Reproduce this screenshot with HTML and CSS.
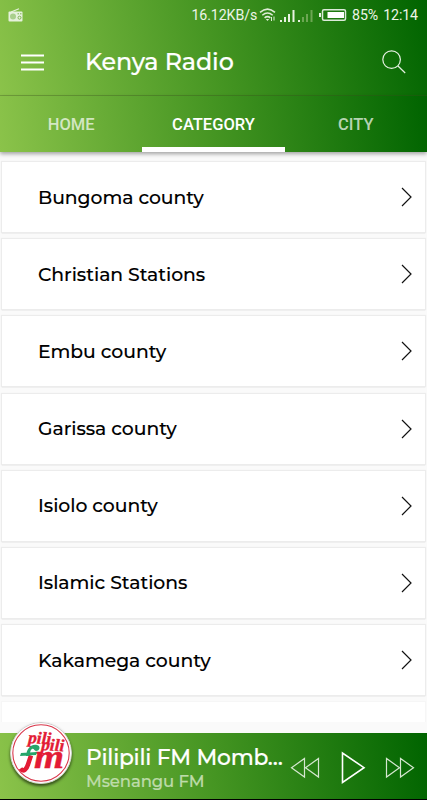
FILE: index.html
```html
<!DOCTYPE html>
<html lang="en">
  <head>
    <meta charset="UTF-8" />
    <meta name="viewport" content="width=device-width, initial-scale=1.0" />
    <title>Kenya Radio</title>
    <link rel="stylesheet" href="styles.css">
  </head>
  <body>
    <div class="app">
      <header class="header">
        <div class="status">
          <svg class="status-radio" width="15" height="14" viewBox="0 0 15 14">
            <path d="M3 4 11 .7" stroke="#e6f1dc" stroke-width="1.2" />
            <rect x="0.5" y="3.5" width="14" height="10" rx="1" fill="#e6f1dc" />
            <circle cx="5" cy="8.5" r="3" fill="#a9cf8c" />
            <circle cx="11.5" cy="9.7" r="1.5" fill="none" stroke="#7fb453" />
            <path d="M9.5 5.8h4" stroke="#7fb453" stroke-dasharray="1.5 1" />
          </svg>
          <span class="speed">16.12KB/s</span>
          <svg class="wifi" width="18" height="14" viewBox="0 0 18 14" fill="none" stroke="#e0ecd8" stroke-width="1.5">
            <path d="M1 4.4Q8.5-2.2 16 4.4M3.3 7.3Q8.5 2.8 13.7 7.3M5.6 9.8Q8.5 7.4 11.4 9.8" />
            <path d="m6.8 11 1.7 2 1.7-2z" fill="#e0ecd8" stroke="none" />
            <path d="M12.5 9v4M15 8.5v4" stroke-width="1" />
          </svg>
          <svg class="signal" width="15" height="13" viewBox="0 0 15 13" fill="#e8f2e2">
            <path d="M0 11h2v2H0zM4 8h2v5H4zM8 5h2v8H8zM12.5 1h2v12h-2z" />
          </svg>
          <svg class="signal second" width="15" height="13" viewBox="0 0 15 13" fill="#6ca653">
            <path d="M0 11h2v2H0z" fill="#e8f2e2" />
            <path d="M4 8h2v5H4zM8 5h2v8H8zM12.5 1h2v12h-2z" />
          </svg>
          <svg class="battery" width="28" height="12" viewBox="0 0 28 12">
            <path d="M1 4v4" stroke="#e8f2e2" stroke-width="2" />
            <rect x="3.5" y="0.75" width="23" height="10.5" rx="1.5" fill="none" stroke="#dceada" stroke-width="1.5" />
            <path d="M8.5 3H25v6H8.5z" fill="#fff" />
          </svg>
          <span class="percent">85%</span>
          <span class="time">12:14</span>
        </div>
        <div class="toolbar">
          <button class="btn-menu" aria-label="Menu">
            <svg width="23" height="17" viewBox="0 0 23 17" stroke="#fff" stroke-width="2.1">
              <path d="M0 1.5h23M0 8.5h23M0 15.5h23" />
            </svg>
          </button>
          <h1 class="title">Kenya Radio</h1>
          <button class="btn-search" aria-label="Search">
            <svg width="24" height="24" viewBox="0 0 24 24" fill="none" stroke="#e5f0e2" stroke-width="1.2">
              <circle cx="9.6" cy="9.6" r="8.8" />
              <path d="m16 16 7.2 7" />
            </svg>
          </button>
        </div>
      </header>

      <nav class="tabs">
        <a class="tab">HOME</a>
        <a class="tab active">CATEGORY</a>
        <a class="tab">CITY</a>
      </nav>

      <main class="list">
        <div class="card"><span class="name">Bungoma county</span><svg class="arrow" viewBox="0 0 11 20"><path d="m1 1 9 9-9 9" /></svg></div>
        <div class="card"><span class="name">Christian Stations</span><svg class="arrow" viewBox="0 0 11 20"><path d="m1 1 9 9-9 9" /></svg></div>
        <div class="card"><span class="name">Embu county</span><svg class="arrow" viewBox="0 0 11 20"><path d="m1 1 9 9-9 9" /></svg></div>
        <div class="card"><span class="name">Garissa county</span><svg class="arrow" viewBox="0 0 11 20"><path d="m1 1 9 9-9 9" /></svg></div>
        <div class="card"><span class="name">Isiolo county</span><svg class="arrow" viewBox="0 0 11 20"><path d="m1 1 9 9-9 9" /></svg></div>
        <div class="card"><span class="name">Islamic Stations</span><svg class="arrow" viewBox="0 0 11 20"><path d="m1 1 9 9-9 9" /></svg></div>
        <div class="card"><span class="name">Kakamega county</span><svg class="arrow" viewBox="0 0 11 20"><path d="m1 1 9 9-9 9" /></svg></div>
        <div class="card partial"></div>
      </main>

      <footer class="player">
        <svg class="logo" width="62" height="62" viewBox="0 0 62 62">
          <circle cx="31" cy="31" r="30.5" fill="#fff" stroke="#ccc" />
          <circle cx="31" cy="31" r="28.2" fill="none" stroke="#d8364a" stroke-width="1.1" />
          <g class="logo-text">
            <text x="18" y="21" font-size="17" textLength="23" lengthAdjust="spacingAndGlyphs" transform="rotate(3 18 21)">pili</text>
            <text x="31" y="28" font-size="17" textLength="23" lengthAdjust="spacingAndGlyphs" transform="rotate(3 31 28)">pili</text>
            <text x="24" y="46" font-size="33" textLength="30" lengthAdjust="spacingAndGlyphs">m</text>
          </g>
          <path d="M10.500 46.500c3 4 6 1 7.500-4l3-9" fill="none" stroke="#e31b35" stroke-width="4.500" />
          <path d="M16 34c1-8 5-12 11-11 4 1 3 6-1 6-2 0-2-3-4-2-2 1-2 5-3 7zM11 31l16-1-1 3-16 1z" fill="#27a56b" />
        </svg>
        <div class="track">
          <strong class="track-title">Pilipili FM Momb…</strong>
          <span class="track-sub">Msenangu FM</span>
        </div>
        <div class="controls">
          <svg width="30" height="22" viewBox="0 0 30 22"><path d="M14.500 1.500v18.500L1.500 10.700zM28.500 1.500v18.500l-13-9.300z" /></svg>
          <svg class="play" width="25" height="34" viewBox="0 0 25 34"><path d="M1.500 2v29.500L23 16.700z" /></svg>
          <svg width="30" height="22" viewBox="0 0 30 22"><path d="M1.500 1.500v18.500l13-9.300zM15.500 1.500v18.500l13-9.300z" /></svg>
        </div>
      </footer>
    </div>
  </body>
</html>
```
FILE: styles.css
```css
* {
  box-sizing: border-box;
}
body {
  margin: 0;
  background-color: #000;
  font-family: Montserrat, Inter, sans-serif;
}
button {
  appearance: none;
  border: none;
  padding: 0;
  background-color: transparent;
}
svg {
  display: block;
  flex: none;
}
.app {
  display: flex;
  flex-direction: column;
  width: 427px;
  height: 799px;
  overflow: hidden;
  background-color: #fafafa;
}

/* status bar + toolbar */
.header {
  height: 96px;
  flex: none;
  border-bottom: 1px solid rgba(60, 80, 30, 0.3);
  background: linear-gradient(77.3deg, #8bc34a, #459522 50%, #006400) border-box;
}
.status {
  display: flex;
  align-items: center;
  height: 30px;
  padding: 0 9px 0 8px;
  color: #edf5e8;
  font: 14.2px Roboto, sans-serif;
}
.status-radio {
  margin-right: auto;
}
.speed {
  letter-spacing: -0.1px;
}
.wifi {
  margin-left: 2px;
}
.signal {
  margin-left: 3px;
}
.second {
  margin-left: 3px;
}
.battery {
  margin: 0 5px 0 6px;
}
.time {
  margin-left: 5px;
}
.percent,
.time {
  letter-spacing: -0.1px;
}
.toolbar {
  display: flex;
  align-items: center;
  height: 64px;
  padding: 0 21px;
}
.title {
  flex: 1;
  margin: -1px 0 0 41px;
  color: #fff;
  font-size: 23.8px;
  font-weight: 500;
  letter-spacing: -0.1px;
  -webkit-text-stroke: 0.2px #fff;
}

.tabs {
  display: flex;
  flex: none;
  height: 56px;
  background: linear-gradient(82.5deg, #8bc34a, #459522 50%, #006400);
  box-shadow: 0 2px 4px rgba(0, 0, 0, 0.35);
}
.tab {
  flex: 1;
  border-bottom: 5px solid transparent;
  color: rgba(255, 255, 255, 0.7);
  font: 500 16.5px/57px Roboto, sans-serif;
  text-align: center;
}
.tab.active {
  border-color: #fff;
  color: #fff;
}

.list {
  display: flex;
  flex-direction: column;
  gap: 7.2px;
  height: 570px;
  flex: none;
  padding: 10px 2px 0;
  overflow: hidden;
}
.card {
  display: flex;
  align-items: center;
  justify-content: space-between;
  flex: none;
  height: 70px;
  padding: 0 13px 0 36px;
  background-color: #fff;
  box-shadow: 0 0 1px 1px #ececec, 0 1px 1px #bbb;
}
.card.partial {
  box-shadow: 0 0 1px 1px #f6f6f6;
}
.name {
  color: #000;
  font-size: 18.8px;
  font-weight: 500;
  letter-spacing: -0.04px;
  -webkit-text-stroke: 0.1px #000;
}
.arrow {
  width: 11px;
  height: 20px;
  fill: none;
  stroke: #111;
  stroke-width: 1.2;
}

/* now playing */
.player {
  display: flex;
  align-items: center;
  height: 66px;
  margin-top: auto;
  padding: 0 12px 0 10px;
  background: linear-gradient(81.2deg, #8bc34a, #459522 50%, #006400);
}
.logo {
  margin-top: -26px;
  border-radius: 50%;
  box-shadow: 0 2px 3px rgba(0, 0, 0, 0.6);
}
.logo-text {
  fill: #e31b35;
  font-family: "Liberation Serif", serif;
  font-style: italic;
  font-weight: bold;
  stroke: #e31b35;
  stroke-width: 0.4;
}
.track {
  display: flex;
  flex-direction: column;
  width: 205px;
  margin-top: 4px;
  margin-left: 14px;
  white-space: nowrap;
}
.track-title {
  color: #fff;
  font-size: 21.8px;
  font-weight: 500;
  line-height: 27px;
  letter-spacing: -0.25px;
  -webkit-text-stroke: 0.2px #fff;
}
.track-sub {
  color: #bddba9;
  font-size: 16.5px;
  font-weight: 500;
  line-height: 21px;
  letter-spacing: -0.12px;
  -webkit-text-stroke: 0.2px #bddba9;
}
.controls {
  display: flex;
  align-items: center;
  margin-top: 4px;
  margin-left: auto;
  fill: none;
  stroke: #d5e7d0;
  stroke-width: 1.2;
}
.play {
  margin: 0 19px 0 21px;
  stroke: #fff;
  stroke-width: 1.6;
}
```
